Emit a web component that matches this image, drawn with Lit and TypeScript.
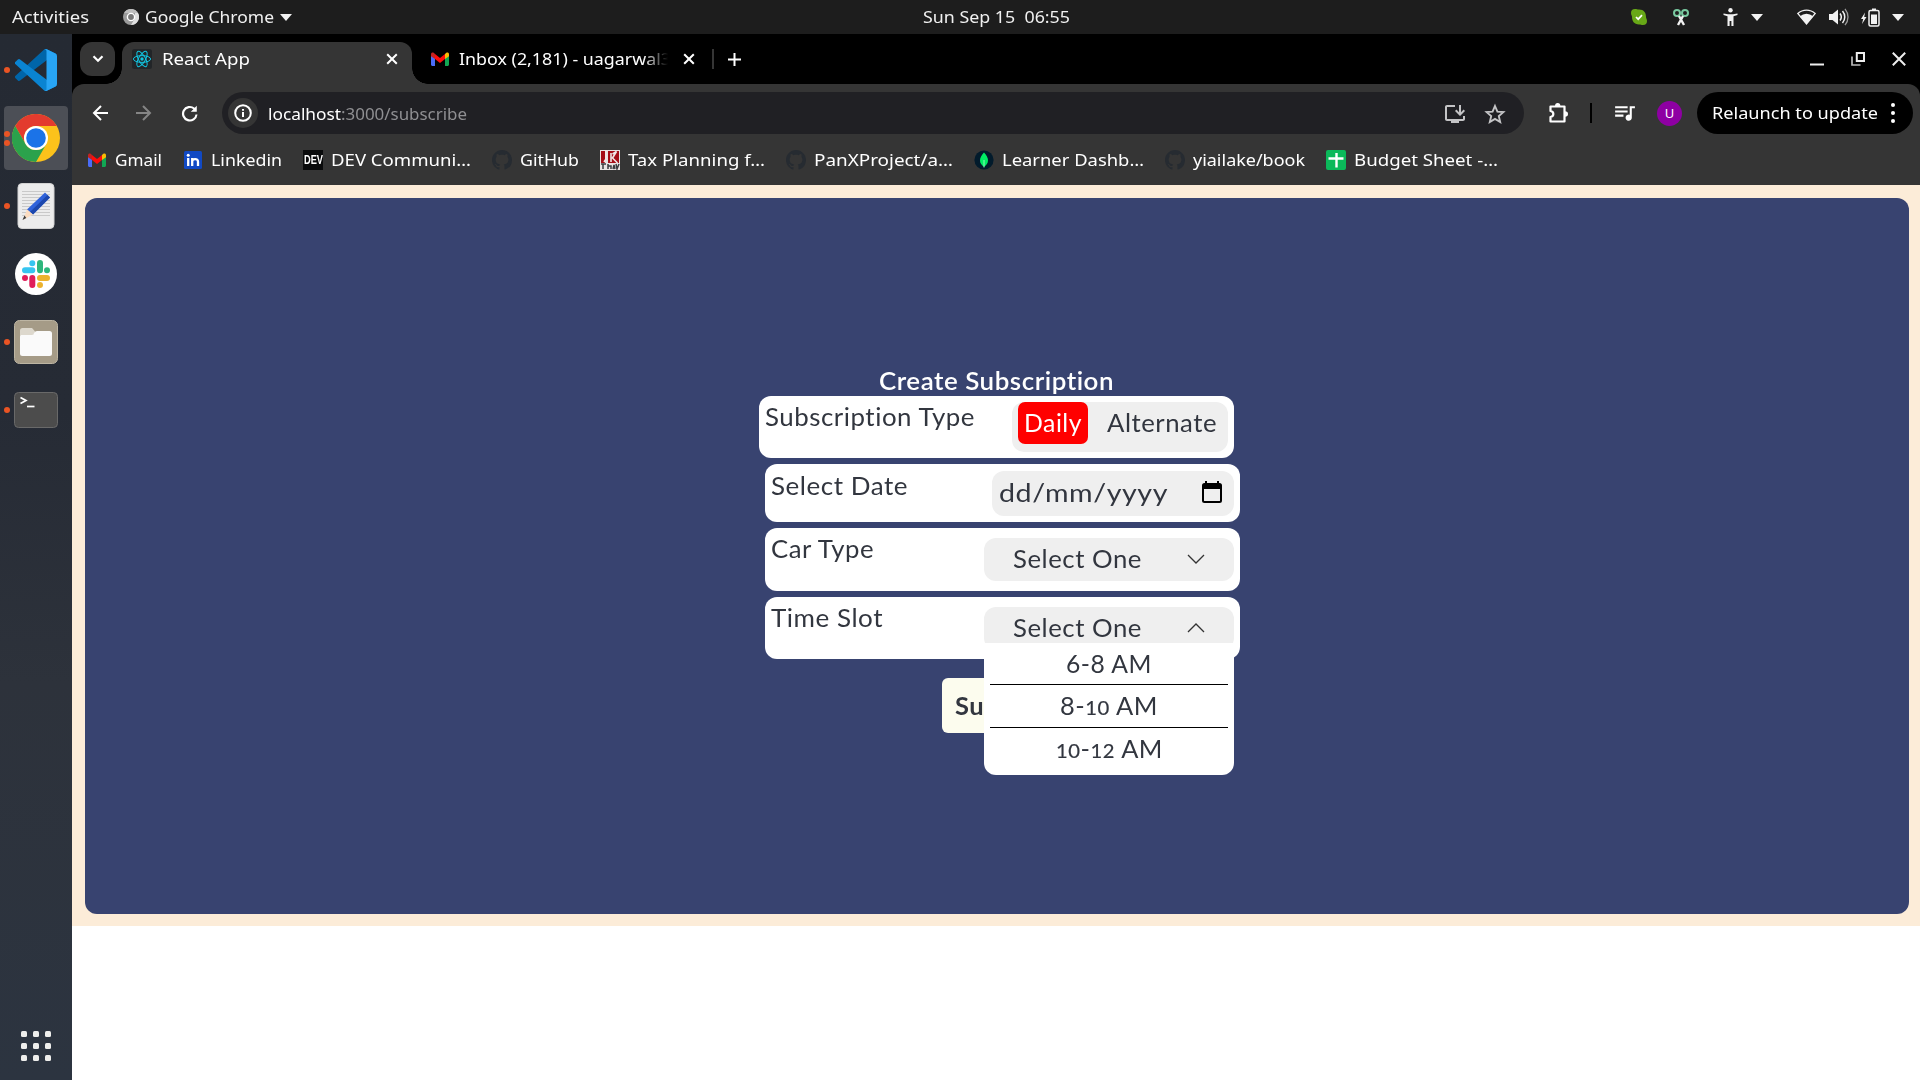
import { LitElement, html, css, svg, nothing } from "lit";
import { customElement, property, state } from "lit/decorators.js";
import { classMap } from "lit/directives/class-map.js";
import { styleMap } from "lit/directives/style-map.js";

/** One line of text, condensed or stretched to the width given in pixels. */
@customElement("fit-text")
class FitText extends LitElement {
  static styles = css`
    :host { display: inline-block; white-space: pre; flex: none; text-align: left; }
    .line { display: block; }
    .run { display: inline-block; transform-origin: 0 50%; }
  `;
  @property({ type: Number }) w = 0;
  @state() private scale = 1;

  firstUpdated() {
    const run = this.renderRoot.querySelector(".run") as HTMLElement;
    const natural = run.offsetWidth ? run.getBoundingClientRect().width : 0;
    if (natural > 0 && this.w > 0) this.scale = this.w / natural;
  }

  render() {
    return html`<span class="line" style=${styleMap({ width: `${this.w}px` })}
      ><span class="run" style=${styleMap({ transform: `scaleX(${this.scale})` })}><slot></slot></span></span>`;
  }
}

const icon = (w: number, h: number, box: string, body: unknown) =>
  html`<svg width=${w} height=${h} viewBox=${box} fill="none">${body}</svg>`;

const gmail = icon(20, 20, "0 0 20 20", svg`
  <path d="M1 5v10.500c0 .8.7 1.500 1.500 1.500H5V8z" fill="#4a6cf7"/>
  <path d="M19 5v10.500c0 .8-.7 1.500-1.500 1.500H15V8z" fill="#12a653"/>
  <path d="M15 5l1.300-1.200C17.500 3 19 3.700 19 5.200v2L15 10z" fill="#fbbc04"/>
  <path d="M1 5.200C1 3.700 2.500 3 3.700 3.800L5 5v5L1 7.200z" fill="#c5221f"/>
  <path d="M5 5l5 4 5-4v5l-5 4-5-4z" fill="#fd0d0b"/>`);

const linkedin = icon(20, 20, "0 0 20 20", svg`
  <rect x="1" y="1" width="18" height="18" rx="1.500" fill="#1149c4"/>
  <circle cx="5.200" cy="5.300" r="1.500" fill="#fff"/>
  <path d="M5.200 8v8M9.200 16V8M9.200 11.500c0-3 5.800-3.600 5.800.3V16" stroke="#fff" stroke-width="2.300"/>`);

const github = icon(20, 20, "0 0 16 16", svg`
  <path fill="#262b31" d="M8 0C3.580 0 0 3.580 0 8c0 3.540 2.290 6.530 5.470 7.590.4.070.55-.17.55-.38 0-.19-.01-.82-.01-1.490-2.010.37-2.530-.49-2.690-.94-.09-.23-.48-.94-.82-1.130-.28-.15-.68-.52-.01-.53.63-.01 1.080.58 1.230.82.72 1.210 1.870.87 2.330.66.07-.52.28-.87.51-1.070-1.780-.2-3.640-.89-3.640-3.950 0-.87.31-1.590.82-2.150-.08-.2-.36-1.020.08-2.120 0 0 .67-.21 2.200.82.64-.18 1.320-.27 2-.27s1.360.09 2 .27c1.530-1.040 2.200-.82 2.200-.82.44 1.100.16 1.920.08 2.120.51.56.82 1.270.82 2.150 0 3.070-1.870 3.750-3.650 3.950.29.25.54.73.54 1.480 0 1.070-.01 1.930-.01 2.200 0 .21.15.46.55.38A8.010 8.010 0 0016 8c0-4.420-3.580-8-8-8z"/>`);

const taxSite = icon(20, 20, "0 0 20 20", svg`
  <path fill="#e9e2e2" d="M0 0h20v20H0z"/><path fill="#a50d17" d="M1 1h4v12H1zM8 1h11v12H8z"/>
  <path d="M6 0v9l-2 3M12.500 4l4-2.500-4 6.500 5 5M11 3v9" stroke="#f1e6e6" stroke-width="1.600"/>
  <path d="M1 14h5M3 14v5M8 14v5M8 16h3v3M13 19l1-4 1 4M16 14l1 5 2-5" stroke="#3b3b3f" stroke-width="1.500"/>`);

const mongo = icon(20, 20, "0 0 20 20", svg`
  <circle cx="10" cy="10" r="9.600" fill="#021b2c"/>
  <path fill="#00ed64" d="M10 2.500c2.500 3 4 5 4 8 0 2.800-1.600 4.700-4 6.500-2.400-1.800-4-3.700-4-6.500 0-3 1.500-5 4-8z"/>
  <path d="M10 10v7.500" stroke="#b3f7d0" stroke-width=".8"/>`);

const sheet = icon(20, 20, "0 0 20 20", svg`
  <rect width="20" height="20" rx="2" fill="#0bb95a"/>
  <path d="M2.500 8.500h15M10.500 3v14.500" stroke="#fff" stroke-width="2.400"/>`);

const react = icon(20, 20, "0 0 20 20", svg`
  <rect width="20" height="20" rx="2.500" fill="#222528"/>
  <g stroke="#12c4e0" stroke-width="1"><ellipse cx="10" cy="10" rx="8.600" ry="3.400"/>
  <ellipse cx="10" cy="10" rx="8.600" ry="3.400" transform="rotate(60 10 10)"/>
  <ellipse cx="10" cy="10" rx="8.600" ry="3.400" transform="rotate(120 10 10)"/></g>
  <circle cx="10" cy="10" r="1.700" fill="#12c4e0"/>`);

const caret = icon(12, 7, "0 0 12 7", svg`<path d="M0 0h12L6 7z" fill="#f2f2f2"/>`);
const cross = icon(12, 12, "0 0 12 12", svg`<path d="M1.200 1.200l9.600 9.600M10.800 1.200l-9.600 9.600" stroke="#fff" stroke-width="2"/>`);

const vscode = icon(42, 42, "0 0 100 100", svg`
  <path fill="#0065A9" d="M96.460 10.800L75.860.88a6.230 6.230 0 00-7.110 1.200L1.300 63.580a4.170 4.170 0 000 6.160l5.510 5.010a4.170 4.170 0 005.320.24L93.360 13.370c2.730-2.070 6.640-.13 6.640 3.300v-.24a6.250 6.250 0 00-3.540-5.630z"/>
  <path fill="#0a84d2" d="M96.460 89.200l-20.600 9.920a6.230 6.230 0 01-7.110-1.200L1.300 36.420a4.170 4.170 0 010-6.170l5.510-5a4.170 4.170 0 015.320-.24l81.230 61.620c2.730 2.070 6.640.12 6.640-3.300v.24a6.250 6.250 0 01-3.540 5.630z"/>
  <path fill="#28a5f5" d="M75.860 99.130a6.230 6.230 0 01-7.110-1.210C71.060 100.220 75 98.590 75 95.330V4.670c0-3.260-3.940-4.890-6.250-2.590a6.230 6.230 0 017.110-1.210l20.600 9.910a6.250 6.250 0 013.540 5.630v67.180a6.250 6.250 0 01-3.540 5.630z"/>`);

const chrome = icon(48, 48, "0 0 48 48", svg`
  <circle cx="24" cy="24" r="24" fill="#fcc21b"/>
  <path fill="#e33b2e" d="M3.200 12A24 24 0 0144.800 12H24a12 12 0 00-10.400 18z"/>
  <path fill="#2ba24c" d="M3.200 12A24 24 0 0024 48l10.400-18A12 12 0 0113.600 30z"/>
  <circle cx="24" cy="24" r="12" fill="#fff"/><circle cx="24" cy="24" r="9.800" fill="#1b73e8"/>`);

const editor = icon(38, 48, "0 0 38 48", svg`
  <rect x="1" y="1.500" width="36" height="45" rx="4" fill="#ececec" stroke="#d3d3d3"/>
  <path d="M5 9.500h28M5 12.500h28M5 15.500h28M5 18.500h28M5 21.500h28M5 24.500h28M5 27.500h28M5 30.500h28M5 33.500h28" stroke="#c9c9c9"/>
  <path d="M28 10.500l5 5-17 17-6-5z" fill="#2f62da"/><path d="M30.500 13l2.500 2.500-17 17-3-2.500z" fill="#1c47ad"/>
  <path d="M10 27.500l6 5-10 5.500z" fill="#fbdcc0"/><path d="M7.500 33.500l1.800 2.400L5.500 38z" fill="#3b3b3b"/>`);

const slack = icon(42, 42, "0 0 42 42", svg`
  <circle cx="21" cy="21" r="21" fill="#fff"/>
  <g stroke-width="6" stroke-linecap="round">
  <path d="M10 17.300h7.300M17.300 10.200v0" stroke="#36c5f0"/><path d="M25 10v7.300M32 17.300v0" stroke="#2eb67d"/>
  <path d="M25 25h7M25 32v0" stroke="#ecb22e"/><path d="M17.300 25v7M10 25v0" stroke="#e01e5a"/></g>`);

const files = icon(44, 44, "0 0 44 44", svg`
  <rect x=".5" y=".5" width="43" height="43" rx="5" fill="#a59b87" stroke="#bdb5a3"/>
  <path d="M6 20v-9.500A2.500 2.500 0 018.500 8H18l3.500 4L18 16z" fill="#ddd8cd"/>
  <path d="M6 17c0-1.500 1-2 2-2h10c2 0 2-4 5-4h12.500a2.500 2.500 0 012.500 2.500v20a2.500 2.500 0 01-2.500 2.500h-27A2.500 2.500 0 016 33.500z" fill="#fafafa"/>`);

const terminal = icon(44, 36, "0 0 44 36", svg`
  <rect x=".5" y=".5" width="43" height="35" rx="4" fill="#4c4c4c" stroke="#696969"/>
  <path d="M6.500 5.500l5.500 3-5.500 3" stroke="#fff" stroke-width="1.700"/><path d="M13 14.500h7.500" stroke="#fff" stroke-width="1.700"/>`);

interface DockItem { art: unknown; dots: number; active?: boolean }
const DOCK: DockItem[] = [
  { art: vscode, dots: 1 },
  { art: chrome, dots: 2, active: true },
  { art: editor, dots: 1 },
  { art: slack, dots: 0 },
  { art: files, dots: 1 },
  { art: terminal, dots: 1 },
];

@customElement("side-dock")
class SideDock extends LitElement {
  static styles = css`
    :host {
      display: flex; flex-direction: column; width: 72px; flex: none; box-sizing: border-box; padding-top: 2px;
      background: linear-gradient(#252a33 0, #262b35 36%, #2d323b 62%, #2c3440 100%);
    }
    .item { display: flex; height: 68px; align-items: center; }
    .dots { display: flex; flex-direction: column; gap: 3px; width: 6px; margin-left: 4px; margin-right: -6px; z-index: 1; }
    .dots i { width: 6px; height: 6px; border-radius: 50%; background: #ea5424; }
    .item .tile:first-child { margin-left: 4px; }
    .tile { display: flex; width: 64px; height: 64px; align-items: center; justify-content: center; border-radius: 4px; }
    .tile.active { background: #4c4f56; }
    .apps { display: grid; grid-template-columns: repeat(3, 6px); gap: 6px; margin: auto 0 19px 21px; }
    .apps i { width: 6px; height: 6px; border-radius: 1.500px; background: #eeeeec; }
  `;
  render() {
    return html`
      ${DOCK.map((d) => html`<div class="item">
        <div class="dots">${Array.from({ length: d.dots }, () => html`<i></i>`)}</div>
        <div class=${classMap({ tile: true, active: !!d.active })}>${d.art}</div>
      </div>`)}
      <div class="apps">${Array.from({ length: 9 }, () => html`<i></i>`)}</div>`;
  }
}

@customElement("top-panel")
class TopPanel extends LitElement {
  static styles = css`
    :host {
      display: grid; grid-template-columns: minmax(0, 1fr) auto minmax(0, 1fr); align-items: center; height: 34px; line-height: 34px;
      background: #1d1d1d; color: #f0f0f0; font-size: 16px; flex: none;
    }
    svg { flex: none; display: block; }
    .left { display: flex; align-items: center; padding-left: 12px; }
    .app { margin-left: 34px; }
    .name { margin: 0 6px 0 6px; }
    .clock { padding-left: 73px; }
    .right { display: flex; align-items: center; justify-content: flex-end; padding-right: 16px; }
    .g1 { margin-left: 26px; } .g2 { margin-left: 34px; } .g3 { margin-left: 13px; }
    .g4 { margin-left: 34px; } .g5 { margin-left: 13px; } .g6 { margin-left: 12px; }
  `;
  render() {
    return html`
      <div class="left">
        <fit-text w="77">Activities</fit-text>
        <span class="app">${icon(16, 16, "0 0 16 16", svg`<circle cx="8" cy="8" r="8" fill="#9b9b9b"/>
          <path d="M8 16l4-7V4h3a8 8 0 01-7 12z" fill="#e0e0e0"/><path d="M1 4a8 8 0 0114 0z" fill="#bdbdbd"/>
          <circle cx="8" cy="8" r="3.600" fill="#777" stroke="#fff" stroke-width="1.400"/>`)}</span>
        <fit-text class="name" w="129">Google Chrome</fit-text>${caret}
      </div>
      <div class="clock"><fit-text w="147">Sun Sep 15  06:55</fit-text></div>
      <div class="right">
        ${icon(16, 16, "0 0 16 16", svg`<path d="M4 0c2 0 2 .6 4 .6C13 .6 15 4 15 8c0 1.600 1 2 1 4a4 4 0 01-4 4c-2 0-2-.6-4-.6C3 15.400 1 12 1 8 1 6.500 0 6 0 4a4 4 0 014-4z" fill="#68a817"/><path d="M5 8l2.200 2.200L11 6.200" stroke="#fff" stroke-width="1.700"/>`)}
        <span class="g1">${icon(16, 17, "0 0 16 17", svg`<circle cx="4" cy="4" r="3" stroke="#79c9a0" stroke-width="2"/><circle cx="12" cy="4" r="3" stroke="#79c9a0" stroke-width="2"/><path d="M6 7l5 9M10 7l-5 9" stroke="#f2f2f2" stroke-width="2.400"/>`)}</span>
        <span class="g2">${icon(15, 18, "0 0 15 18", svg`<circle cx="7.500" cy="2.200" r="2.200" fill="#f2f2f2"/><path d="M.5 5.500l4.500.8h5l4.500-.8v1.600l-4 1.100V18H8.400v-5H6.600v5H4.500V8.200L.5 7.100z" fill="#f2f2f2"/>`)}</span>
        <span class="g3">${caret}</span>
        <span class="g4">${icon(19, 16, "0 0 19 16", svg`<path d="M.8 4.500a13 13 0 0117.400 0L9.500 15z" stroke="#f2f2f2" stroke-width="1.300"/><path d="M3 7.200a9.500 9.500 0 0113 0L9.500 15z" fill="#f2f2f2"/>`)}</span>
        <span class="g5">${icon(20, 18, "0 0 20 18", svg`<path d="M0 6h3.500L9 1.500v15L3.500 12H0z" fill="#f2f2f2"/><path d="M11 5.500c1.500 2 1.500 5 0 7M13.500 3c3 3.500 3 8.500 0 12" stroke="#f2f2f2" stroke-width="1.500"/><path d="M16 .8c4 5 4 11.500 0 16.400" stroke="#9a9a9a" stroke-width="1.300"/>`)}</span>
        <span class="g6">${icon(19, 19, "0 0 19 19", svg`<path d="M4 4.500L0 11h2.200L1 16l4.500-7H3.200z" fill="#f2f2f2"/><rect x="8" y="2.500" width="10" height="15.500" rx="1.500" stroke="#f2f2f2" stroke-width="1.500"/><path d="M11 .5h4v2h-4zM10 6.500h6V16h-6z" fill="#f2f2f2"/>`)}</span>
        <span class="g6">${caret}</span>
      </div>`;
  }
}

interface Bookmark { art: unknown; label: string; w: number }
const dev = html`<span class="dev"><fit-text w="19">DEV</fit-text></span>`;
const BOOKMARKS: Bookmark[] = [
  { art: gmail, label: "Gmail", w: 47 },
  { art: linkedin, label: "Linkedin", w: 71 },
  { art: dev, label: "DEV Communi…", w: 140 },
  { art: github, label: "GitHub", w: 59 },
  { art: taxSite, label: "Tax Planning f…", w: 137 },
  { art: github, label: "PanXProject/a…", w: 139 },
  { art: mongo, label: "Learner Dashb…", w: 142 },
  { art: github, label: "yiailake/book", w: 112 },
  { art: sheet, label: "Budget Sheet -…", w: 144 },
];

@customElement("browser-chrome")
class BrowserChrome extends LitElement {
  static styles = css`
    :host { display: block; color: #fff; flex: none; }
    svg { display: block; flex: none; }
    .strip { display: flex; height: 50px; background: #000; font-size: 17px; line-height: 50px; align-items: center; }
    .search { display: flex; width: 35px; height: 34px; margin-left: 8px; border-radius: 12px; background: #353535; align-items: center; justify-content: center; }
    .tab { display: flex; align-items: center; align-self: flex-end; box-sizing: border-box; height: 42px; line-height: 34px; padding-bottom: 8px; }
    .on { position: relative; width: 290px; margin-left: 7px; padding-left: 10px; border-radius: 12px 12px 0 0; background: #353535; }
    .on::before, .on::after { content: ""; position: absolute; bottom: 0; width: 16px; height: 16px; }
    .on::before { left: -16px; background: radial-gradient(circle at 0 0, #0000 15.500px, #353535 16px); }
    .on::after { right: -16px; background: radial-gradient(circle at 100% 0, #0000 15.500px, #353535 16px); }
    .on fit-text { margin-left: 10px; }
    .on .x { margin-left: auto; margin-right: 14px; }
    .off { margin-left: 18px; }
    .fade { width: 209px; margin-left: 9px; overflow: hidden; -webkit-mask: linear-gradient(90deg, #000 184px, #0000 209px); }
    .off .x { margin-left: 15px; }
    .bar { width: 2px; height: 20px; margin-left: 17px; background: #353535; }
    .plus { margin-left: 14px; }
    .win { display: flex; align-items: center; gap: 27px; margin-left: auto; padding-right: 14px; }
    .tools { background: #000; }
    .nav { display: flex; height: 58px; background: #353535; border-radius: 12px 12px 0 0; align-items: center; box-sizing: border-box; padding: 0 7px 0 19px; }
    .fwd { margin-left: 26px; } .reload { margin-left: 26px; }
    .url { display: flex; align-items: center; width: 1302px; height: 42px; margin-left: 21px; border-radius: 21px; background: #202024; font-size: 16px; line-height: 42px; box-sizing: border-box; padding: 1px 17px 0 6px; }
    .info { display: flex; width: 30px; height: 30px; border-radius: 50%; background: #353535; align-items: center; justify-content: center; margin: -1px 10px 0 0; }
    .path { color: #8f8f92; }
    .install { margin-left: auto; } .star { margin-left: 16px; }
    .ext { margin-left: 23px; }
    .sep { width: 2px; height: 20px; margin-left: 19px; background: #000; }
    .music { margin-left: 20px; }
    .avatar { width: 25px; height: 25px; margin-left: 20px; border-radius: 50%; background: #8e00a3; font-size: 13px; line-height: 25px; text-align: center; }
    .relaunch { display: flex; align-items: center; height: 42px; width: 216px; box-sizing: border-box; margin-left: auto; padding-left: 15px; border-radius: 21px; background: #000; font-size: 17px; line-height: 42px; }
    .kebab { display: grid; gap: 4px; margin-left: 13px; }
    .kebab i { width: 4px; height: 4px; border-radius: 50%; background: #fff; }
    .marks { display: flex; gap: 21px; height: 43px; box-sizing: border-box; padding: 0 0 7px 15px; background: #353535; align-items: center; font-size: 17px; line-height: 36px; }
    .mark { display: flex; align-items: center; gap: 8px; }
    .mark > fit-text { height: 37px; }
    .dev { display: flex; width: 20px; height: 20px; background: #0a0b0c; font: bold 13px/20px "Liberation Sans", sans-serif; justify-content: center; align-items: center; }
  `;
  render() {
    return html`
      <div class="strip">
        <div class="search">${icon(12, 8, "0 0 12 8", svg`<path d="M1.500 1.200L6 5.700l4.500-4.500" stroke="#fff" stroke-width="2.200"/>`)}</div>
        <div class="tab on">${react}<fit-text w="88">React App</fit-text><span class="x">${cross}</span></div>
        <div class="tab off">${gmail}<div class="fade"><fit-text w="212">Inbox (2,181) - uagarwal3</fit-text></div><span class="x">${cross}</span></div>
        <div class="bar"></div>
        <span class="plus">${icon(13, 13, "0 0 13 13", svg`<path d="M0 6.500h13M6.500 0v13" stroke="#fff" stroke-width="2"/>`)}</span>
        <div class="win">
          ${icon(14, 14, "0 0 14 14", svg`<path d="M0 12.500h14" stroke="#eee" stroke-width="2"/>`)}
          ${icon(14, 14, "0 0 14 14", svg`<path d="M5.800 1h7.200v8H5.800z" stroke="#eee" stroke-width="2"/><path d="M1 4.500V13h8.500" stroke="#bbb" stroke-width="1.700"/>`)}
          ${icon(14, 14, "0 0 14 14", svg`<path d="M.8.8l12.400 12.400M13.200.8L.8 13.200" stroke="#eee" stroke-width="2"/>`)}
        </div>
      </div>
      <div class="tools">
        <div class="nav">
          ${icon(18, 18, "0 0 18 18", svg`<path d="M17 9H3M10 2L3 9l7 7" stroke="#fff" stroke-width="2"/>`)}
          <span class="fwd">${icon(18, 18, "0 0 18 18", svg`<path d="M1 9h14M8 2l7 7-7 7" stroke="#858585" stroke-width="2"/>`)}</span>
          <span class="reload">${icon(22, 22, "0 0 24 24", svg`<path fill="#fff" d="M19.400 4v6.600h-6.600l2.900-2.700A6.200 6.200 0 1018 13.500h2.200A8.500 8.500 0 1117.200 6.300z"/>`)}</span>
          <div class="url">
            <div class="info">${icon(18, 18, "0 0 18 18", svg`<circle cx="9" cy="9" r="7.800" stroke="#fff" stroke-width="2"/><path d="M9 8v5M9 5v1.800" stroke="#fff" stroke-width="2"/>`)}</div>
            <fit-text w="73">localhost</fit-text><fit-text class="path" w="126">:3000/subscribe</fit-text>
            <span class="install">${icon(24, 24, "0 0 24 24", svg`<path fill="#c4c4c6" d="M20 17H4V5h8V3H4c-1.110 0-2 .89-2 2v12c0 1.100.89 2 2 2h4v2h8v-2h4c1.100 0 2-.9 2-2v-3h-2z"/><path fill="#c4c4c6" d="M17 14l5-5-1.410-1.410L18 10.170V3h-2v7.170l-2.590-2.580L12 9z"/>`)}</span>
            <span class="star">${icon(24, 24, "0 0 24 24", svg`<path d="M12 4l2.400 5.600 6 .5-4.600 4 1.400 5.900-5.200-3.100L6.800 20l1.400-5.900-4.600-4 6-.5z" stroke="#c4c4c6" stroke-width="1.900"/>`)}</span>
          </div>
          <span class="ext">${icon(24, 24, "0 0 24 24", svg`<path d="M3.500 5.500h14v15h-14V16c3.800-.6 3.800-5.400 0-6z" stroke="#fff" stroke-width="2.200" stroke-linejoin="round"/><path d="M8 5a2.700 3 0 015.400 0zM18 10.300a3 2.700 0 010 5.400z" fill="#fff"/>`)}</span>
          <div class="sep"></div>
          <span class="music">${icon(25, 25, "0 0 24 24", svg`<path fill="#fff" d="M15 5H3v2h12zm0 4H3v2h12zM3 15h8v-2H3zM17 5v8.200a3 3 0 102 2.800V7h3V5z"/>`)}</span>
          <div class="avatar">U</div>
          <div class="relaunch"><fit-text w="166">Relaunch to update</fit-text><span class="kebab"><i></i><i></i><i></i></span></div>
        </div>
        <div class="marks">${BOOKMARKS.map((b) => html`<div class="mark">${b.art}<fit-text w=${b.w}>${b.label}</fit-text></div>`)}</div>
      </div>`;
  }
}

const chevron = (open: boolean) =>
  icon(18, 10, "0 0 18 10", svg`<path d=${open ? "M1 9l8-8 8 8" : "M1 1l8 8 8-8"} stroke="#333" stroke-width="1.300"/>`);

@customElement("subscription-page")
class SubscriptionPage extends LitElement {
  static styles = css`
    :host { display: block; flex: 1; background: #fff; font: 24.500px/28px Lato, "Liberation Sans", sans-serif; letter-spacing: .5px; font-variant-ligatures: none; color: #32363f; }
    .frame { background: #fcecd8; padding: 13px 11px 12px 13px; }
    .card { display: flex; flex-direction: column; align-items: center; box-sizing: border-box; height: 716px; padding-top: 168px; border-radius: 12px; background: #384370; }
    .form { display: flex; flex-direction: column; align-items: center; width: 475px; margin-left: -1px; }
    .title { height: 30px; line-height: 30px; color: #fff; font-weight: 600; }
    .row { display: flex; justify-content: space-between; align-items: flex-start; flex: none; width: 475px; box-sizing: border-box; padding: 6px 6px 0 6px; border-radius: 12px; background: #fff; height: 63px; margin-top: 6px; }
    .label { line-height: 30px; }
    .row.first { height: 62px; margin-top: 0; }
    .row.in { position: relative; left: 6px; }
    .row.date { height: 58px; padding-top: 7px; }
    .row.last { height: 62px; }
    .toggle { display: flex; box-sizing: border-box; width: 216px; height: 50px; padding-left: 6px; border-radius: 12px; background: #efefef; line-height: 42px; }
    .pick { width: 70px; height: 42px; border-radius: 7px; background: #f00; color: #fff; }
    .pick fit-text { margin-left: 6px; }
    .alt { margin-left: 19px; }
    .field { display: flex; justify-content: space-between; align-items: flex-start; box-sizing: border-box; width: 242px; height: 45px; padding: 0 12px 0 7px; border-radius: 12px; background: #efefef; line-height: 43px; }
    .field svg { display: block; margin-top: 10px; }
    .select { position: relative; display: flex; justify-content: space-between; align-items: flex-start; box-sizing: border-box; width: 250px; height: 43px; margin-top: 4px; padding: 0 29px; border-radius: 12px; background: #efefef; line-height: 41px; }
    .select svg { display: block; margin-top: 16px; }
    .menu { position: absolute; z-index: 2; left: 0; top: 36px; width: 250px; height: 132px; box-sizing: border-box; padding: 0 6px; border-radius: 0 0 12px 12px; background: #fff; }
    .option { display: flex; justify-content: center; height: 42px; line-height: 42px; border-bottom: 1px solid #000; }
    .option:first-child { height: 41px; }
    .option:last-child { border: 0; }
    .old { font-size: 19.500px; -webkit-text-stroke: .2px; }
    .submit { height: 55px; width: 109px; margin-top: 19px; border-radius: 6px; background: #fcfcee; font-weight: 700; line-height: 55px; box-sizing: border-box; padding-left: 13px; }
  `;
  @state() private open = "Time Slot";

  private label(text: string, w: number) {
    return html`<fit-text class="label" w=${w}>${text}</fit-text>`;
  }

  private select(name: string) {
    const open = this.open === name;
    const old = (n: string) => html`<span class="old">${n}</span>`;
    return html`<div class="select"><fit-text w="129">Select One</fit-text>${chevron(open)}
      ${open ? html`<div class="menu">
        <div class="option"><fit-text w="86">6-8 AM</fit-text></div>
        <div class="option"><fit-text w="98">8-${old("10")} AM</fit-text></div>
        <div class="option"><fit-text w="107">${old("10")}-${old("12")} AM</fit-text></div>
      </div>` : nothing}</div>`;
  }

  render() {
    return html`<div class="frame"><div class="card"><div class="form">
      <div class="title"><fit-text w="235">Create Subscription</fit-text></div>
      <div class="row first">${this.label("Subscription Type", 210)}
        <div class="toggle"><div class="pick"><fit-text w="58">Daily</fit-text></div><fit-text class="alt" w="110">Alternate</fit-text></div>
      </div>
      <div class="row in date">${this.label("Select Date", 137)}
        <div class="field"><fit-text w="169">dd/mm/yyyy</fit-text>
          ${icon(20, 22, "0 0 20 22", svg`<rect x="1" y="3" width="18" height="18" rx="1.500" stroke="#000" stroke-width="2"/><path d="M1 3h18v5H1zM3 0h2v3H3zM15 0h2v3h-2z" fill="#000"/>`)}
        </div>
      </div>
      <div class="row in">${this.label("Car Type", 103)}${this.select("Car Type")}</div>
      <div class="row in last">${this.label("Time Slot", 112)}${this.select("Time Slot")}</div>
      <div class="submit"><fit-text w="83">Submit</fit-text></div>
    </div></div></div>`;
  }
}

@customElement("app-root")
class AppRoot extends LitElement {
  static styles = css`
    :host { display: flex; flex-direction: column; width: 1920px; height: 1080px; overflow: hidden; font-family: "Noto Sans", "Open Sans", sans-serif; background: #fff; }
    .body { display: flex; flex: 1; min-height: 0; }
    .window { display: flex; flex-direction: column; flex: 1; min-width: 0; }
  `;
  render() {
    return html`<top-panel></top-panel>
      <div class="body"><side-dock></side-dock>
        <div class="window"><browser-chrome></browser-chrome><subscription-page></subscription-page></div>
      </div>`;
  }
}
